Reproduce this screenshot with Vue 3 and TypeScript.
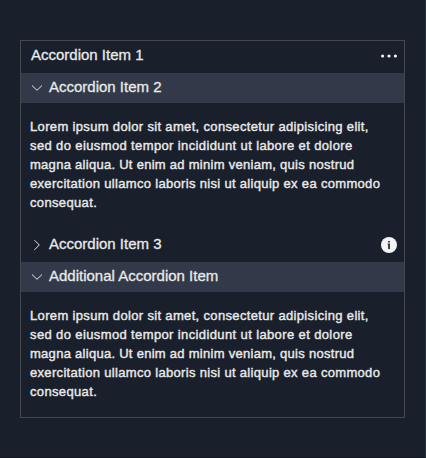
<script setup lang="ts">
import { ref } from 'vue'

interface Line {
  text: string
  spacing: string
}

interface Item {
  id: number
  title: string
  open: boolean
  chevron: boolean
  action?: 'more' | 'info'
  lines: Line[]
}

const lorem: Line[] = [
  { text: 'Lorem ipsum dolor sit amet, consectetur adipisicing elit,', spacing: '0.34px' },
  { text: 'sed do eiusmod tempor incididunt ut labore et dolore', spacing: '0.38px' },
  { text: 'magna aliqua. Ut enim ad minim veniam, quis nostrud', spacing: '0.28px' },
  { text: 'exercitation ullamco laboris nisi ut aliquip ex ea commodo', spacing: '0.32px' },
  { text: 'consequat.', spacing: '0.35px' },
]

const items = ref<Item[]>([
  { id: 1, title: 'Accordion Item 1', open: false, chevron: false, action: 'more', lines: lorem },
  { id: 2, title: 'Accordion Item 2', open: true, chevron: true, lines: lorem },
  { id: 3, title: 'Accordion Item 3', open: false, chevron: true, action: 'info', lines: lorem },
  { id: 4, title: 'Additional Accordion Item', open: true, chevron: true, lines: lorem },
])

function toggle(item: Item): void {
  if (item.chevron) item.open = !item.open
}
</script>

<template>
  <main class="page">
    <div class="accordion">
      <section v-for="item in items" :key="item.id" class="item">
        <header class="head" :class="{ open: item.open }" @click="toggle(item)">
          <svg v-if="item.chevron" class="chevron" viewBox="0 0 12 12">
            <path v-if="item.open" d="M1 3.5 6 8.3 11 3.5" />
            <path v-else d="M3.5 1.2 8.3 6 3.5 10.8" />
          </svg>
          <span class="title">{{ item.title }}</span>
          <svg v-if="item.action === 'more'" class="action" viewBox="0 0 16 16">
            <circle cx="1.6" cy="8" r="1.6" />
            <circle cx="8" cy="8" r="1.6" />
            <circle cx="14.4" cy="8" r="1.6" />
          </svg>
          <svg v-if="item.action === 'info'" class="action" viewBox="0 0 16 16">
            <circle cx="8" cy="8" r="8" />
            <path class="mark" d="M7 4h2v1.5H7zM6.5 6.5H9V12H7V7.5h-.5z" />
          </svg>
        </header>
        <div v-if="item.open" class="body">
          <div v-for="(line, i) in item.lines" :key="i" :style="{ letterSpacing: line.spacing }">{{ line.text }}</div>
        </div>
      </section>
    </div>
  </main>
</template>

<style>
body {
  background: #1a202b;
}
</style>

<style scoped>
.page {
  box-sizing: border-box;
  width: 426px;
  height: 458px;
  padding: 40px 20px;
  background: #1a202b;
  border-right: 1px solid #28323b;
  border-bottom: 1px solid #141823;
  font-family: "Liberation Sans", Arial, sans-serif;
  color: #e9e9e9;
}
.accordion {
  box-sizing: border-box;
  width: 385px;
  height: 378px;
  border: 1px solid #444950;
  display: flex;
  flex-direction: column;
  gap: 2px;
}
.head {
  display: flex;
  align-items: center;
  height: 30px;
  box-sizing: border-box;
  padding: 0 7px 0 10px;
  cursor: pointer;
}
.head.open {
  background: #323a49;
}
.chevron {
  width: 12px;
  height: 12px;
  margin-right: 6px;
  fill: none;
  stroke: #e4e6e8;
  stroke-width: 1;
}
.title {
  font-size: 15px;
  line-height: 18px;
  padding-bottom: 2px;
  white-space: nowrap;
  -webkit-text-stroke: 0.3px #e9e9e9;
}
.action {
  width: 16px;
  height: 16px;
  margin-left: auto;
  fill: #f4f4f4;
}
.mark {
  fill: #3a404a;
}
.body {
  height: 125px;
  box-sizing: border-box;
  padding: 14px 9px 0;
  font-size: 13px;
  line-height: 19px;
  white-space: nowrap;
  -webkit-text-stroke: 0.4px #e9e9e9;
}
</style>
